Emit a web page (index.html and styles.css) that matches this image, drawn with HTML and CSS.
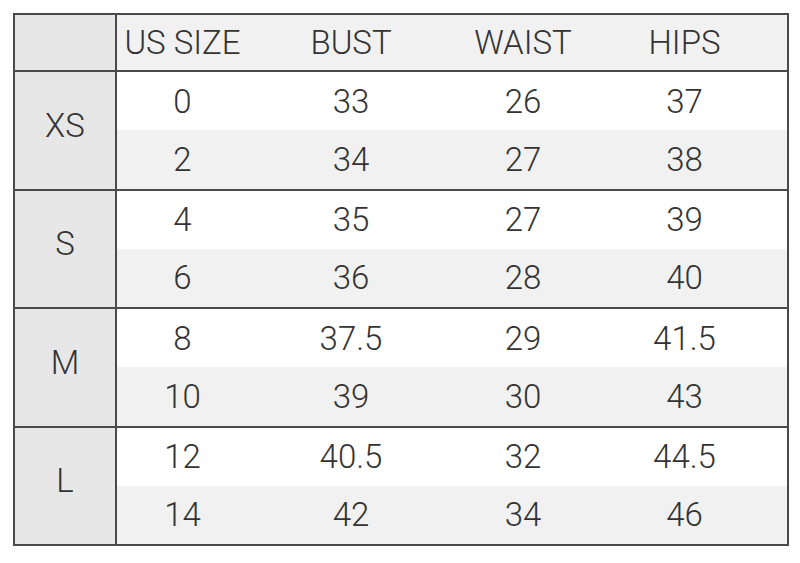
FILE: index.html
```html
<!DOCTYPE html>
<html>
<head>
<meta charset="utf-8">
<link rel="stylesheet" href="styles.css">
</head>
<body>
<table class="chart">
  <colgroup>
    <col class="c-size">
    <col class="c1">
    <col class="c2">
    <col class="c3">
    <col class="c4">
  </colgroup>
  <thead>
    <tr class="head">
      <th class="size corner"></th>
      <th>US SIZE</th>
      <th>BUST</th>
      <th>WAIST</th>
      <th class="last">HIPS</th>
    </tr>
  </thead>
  <tbody>
    <tr class="first"><th class="size" rowspan="2">XS</th><td>0</td><td>33</td><td>26</td><td class="last">37</td></tr>
    <tr class="alt"><td>2</td><td>34</td><td>27</td><td class="last">38</td></tr>
    <tr class="first"><th class="size" rowspan="2">S</th><td>4</td><td>35</td><td>27</td><td class="last">39</td></tr>
    <tr class="alt"><td>6</td><td>36</td><td>28</td><td class="last">40</td></tr>
    <tr class="first"><th class="size" rowspan="2">M</th><td>8</td><td>37.5</td><td>29</td><td class="last">41.5</td></tr>
    <tr class="alt"><td>10</td><td>39</td><td>30</td><td class="last">43</td></tr>
    <tr class="first"><th class="size" rowspan="2">L</th><td>12</td><td>40.5</td><td>32</td><td class="last">44.5</td></tr>
    <tr class="alt"><td>14</td><td>42</td><td>34</td><td class="last">46</td></tr>
  </tbody>
</table>
</body>
</html>
```

FILE: styles.css
```css
html, body {
  margin: 0;
  padding: 0;
  background: #ffffff;
}

body {
  padding: 13px 0 0 13px;
}

.chart {
  border-collapse: collapse;
  border: 2px solid #4a4a4a;
  width: 774px;
  table-layout: fixed;
  font-family: Roboto, "Liberation Sans", Arial, sans-serif;
  font-weight: 300;
  font-size: 33px;
  letter-spacing: 0;
  color: #333333;
}

.c-size { width: 102px; }
.c1 { width: 132px; }
.c2 { width: 206px; }
.c3 { width: 138px; }
.c4 { width: 196px; }

.chart th,
.chart td {
  font-weight: 300;
  text-align: center;
  vertical-align: middle;
  padding: 0;
}

.head th {
  height: 55px;
  background: #f1f1f1;
  border-bottom: 2px solid #4a4a4a;
}

.chart .last {
  padding-right: 10px;
}

.chart .size {
  background: #e7e7e7;
  border-right: 2px solid #4a4a4a;
  padding-bottom: 10px;
}

.chart .corner {
  padding: 0;
}

tbody tr td {
  height: 58.25px;
  background: #ffffff;
}

tbody tr.alt td {
  background: #f1f1f1;
}

tbody tr.first {
  border-top: 2px solid #4a4a4a;
}
```
